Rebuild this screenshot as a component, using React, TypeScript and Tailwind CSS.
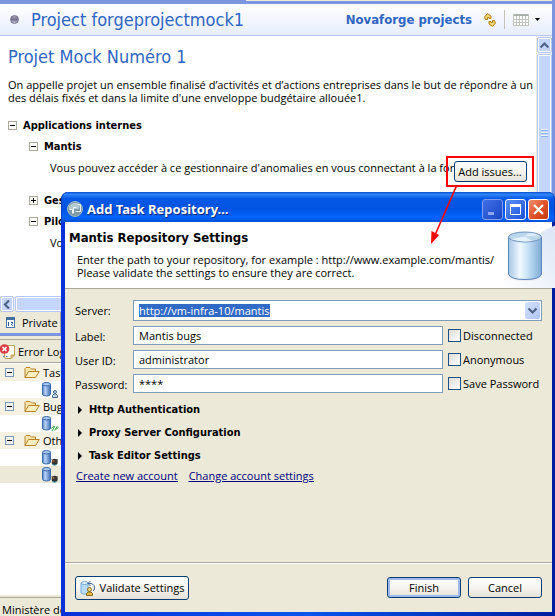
import type { ReactNode } from 'react';

const BODY = "font-['Open_Sans','Noto_Sans',sans-serif] text-[11px] leading-[13px] text-black";
const HEAVY = "font-['DejaVu_Sans_Condensed','DejaVu_Sans',sans-serif] font-bold";
const TITLE = "font-['DejaVu_Sans_Condensed','DejaVu_Sans',sans-serif] text-[18px] leading-5";

function Toggle({ open, soft }: { open: boolean; soft?: boolean }) {
  return (
    <button
      type="button"
      aria-label={open ? 'Collapse' : 'Expand'}
      className={
        soft
          ? 'grid size-[9px] shrink-0 place-items-center border border-[#7b98b8] bg-[#f4f3ee]'
          : 'grid size-[9px] shrink-0 place-items-center border border-[#aca899] bg-white'
      }
    >
      <svg width="5" height="5" viewBox="0 0 5 5" shapeRendering="crispEdges">
        <path d={open ? 'M0 2h5v1H0z' : 'M0 2h5v1H0zM2 0h1v5H2z'} fill="#000" />
      </svg>
    </button>
  );
}

function Section({ title, open, className }: { title: string; open: boolean; className: string }) {
  return (
    <div className={`flex items-center gap-1.5 whitespace-nowrap ${HEAVY} ${className}`}>
      <Toggle open={open} />
      <h3>{title}</h3>
    </div>
  );
}

function Folder() {
  return (
    <svg width="16" height="13" viewBox="0 0 16 13" className="shrink-0">
      <path d="M1 11.5V2.5L2 1.5H6L7.5 3H11.5V5.5" fill="#fbe7ae" stroke="#b98227" />
      <path d="M1 11.5L4.5 5.5H15.3L11.5 11.5Z" fill="#fdeec0" stroke="#b98227" strokeLinejoin="round" />
    </svg>
  );
}

function Repository({ kind }: { kind: 'user' | 'green' | 'bug' }) {
  return (
    <svg width="17" height="16" viewBox="0 0 17 16" className="shrink-0">
      <defs>
        <linearGradient id={`repo-${kind}`}>
          <stop offset="0" stopColor="#4f80c4" />
          <stop offset="0.35" stopColor="#b9d3f7" />
          <stop offset="1" stopColor="#3c6bb4" />
        </linearGradient>
      </defs>
      <path d="M0.500 2.500V12Q0.500 14 4.500 14T8.500 12V2.500Z" fill={`url(#repo-${kind})`} stroke="#3b68ad" />
      <ellipse cx="4.500" cy="2.200" rx="4" ry="1.700" fill="#a9c8f0" stroke="#3b68ad" />
      {kind === 'user' && (
        <g fill="#c6d9ee" stroke="#41658f">
          <path d="M10.500 15.500V13.500L12 12H14L15.500 13.500V15.500Z" />
          <circle cx="13" cy="10" r="1.500" />
        </g>
      )}
      {kind === 'green' && (
        <path d="M9 12.500l3-2M10 15l3-5M12.500 14.500l3-4.500M13.500 13.500l3-2" stroke="#35a045" fill="none" />
      )}
      {kind === 'bug' && (
        <g>
          <path d="M9.500 9.500l2 1M16 9.500l-2 1" stroke="#666" />
          <ellipse cx="12.700" cy="12" rx="3" ry="3.200" fill="#333" />
          <path d="M10.500 11h2" stroke="#e5912a" />
          <path d="M10 14.500q2.500 1.500 5 0" stroke="#4aa5b5" fill="none" />
        </g>
      )}
    </svg>
  );
}

function TreeFolder({ name }: { name: string }) {
  return (
    <div className="flex h-[17px] items-center bg-[#f5f2e3] pl-[5px] whitespace-nowrap">
      <Toggle open soft />
      <span className="ml-2.5 flex items-center gap-[3px]">
        <Folder />
        {name}
      </span>
    </div>
  );
}

function TreeRepo({ kind, selected }: { kind: 'user' | 'green' | 'bug'; selected?: boolean }) {
  return (
    <div className={`flex h-[17px] items-center pl-[42px] ${selected ? 'bg-[#ece9d8]' : 'bg-white'}`}>
      <Repository kind={kind} />
    </div>
  );
}

function Chevron({ d }: { d: string }) {
  return (
    <svg width="9" height="9" viewBox="0 0 9 9">
      <path d={d} fill="none" stroke="#4d6185" strokeWidth="2.200" />
    </svg>
  );
}

const SCROLL_FACE = 'border border-[#b3c7f5] bg-[#c6d6fb] outline outline-white -outline-offset-2';

function Field({ id, label, value, check }: { id: string; label: string; value: string; check: string }) {
  return (
    <div className="flex h-[19px] items-center">
      <label htmlFor={id} className="w-[58px] shrink-0 pt-px">
        {label}
      </label>
      <input
        id={id}
        type="text"
        defaultValue={value}
        className="h-[19px] min-w-0 flex-1 border border-[#7f9db9] bg-white px-[5px] outline-none"
      />
      <label className="flex w-[99px] shrink-0 items-center gap-0.5 pl-[5px] whitespace-nowrap">
        <input
          type="checkbox"
          className="size-[13px] shrink-0 appearance-none border border-[#1c5180] bg-linear-to-br from-[#dcdcd7] to-white checked:bg-[#21a121]"
        />
        {check}
      </label>
    </div>
  );
}

function Expandable({ title }: { title: string }) {
  return (
    <button type="button" aria-expanded={false} className={`flex h-[23px] items-center gap-[7px] ${HEAVY}`}>
      <svg width="4" height="8" viewBox="0 0 4 8">
        <path d="M0 0L4 4L0 8Z" />
      </svg>
      {title}
    </button>
  );
}

function PushButton({ children, className }: { children: ReactNode; className: string }) {
  return (
    <button
      type="button"
      className={`flex items-center justify-center rounded-[3px] border border-[#003c74] bg-linear-to-b from-white via-[#f5f4ee] to-[#e6e2d8] whitespace-nowrap ${className}`}
    >
      {children}
    </button>
  );
}

function CaptionButton({ label, tone, children }: { label: string; tone: string; children: ReactNode }) {
  return (
    <button
      type="button"
      aria-label={label}
      className={`grid size-[21px] place-items-center rounded-[3px] border ${tone}`}
    >
      <svg width="13" height="13" viewBox="0 0 13 13">
        {children}
      </svg>
    </button>
  );
}

function Editor() {
  return (
    <section className="border-r-[3px] border-b-[3px] border-[#7b96df]">
      <div className="flex h-1 flex-col bg-[#7b96df]">
        <div className="ml-[246px] h-px bg-[#ece9d8]" />
      </div>
      <header className="flex h-8 items-center border-b border-[#b4c5f2] bg-linear-to-b from-white to-[#e6edfc] pr-3 pl-2.5 whitespace-nowrap text-[#2f66c2]">
        <span className="size-[9px] rounded-full border border-[#74708c] bg-linear-to-b from-[#a7a4b8] via-[#74718e] to-[#c9c7d8]" />
        <h1 className={`ml-3 flex-1 ${TITLE}`}>Project forgeprojectmock1</h1>
        <a href="#projects" className={`text-[13px] leading-4 ${HEAVY}`}>
          Novaforge projects
        </a>
        <button type="button" aria-label="Refresh" className="ml-3">
          <svg width="12" height="14" viewBox="0 0 12 14" fill="#f7d774" stroke="#b27b13" strokeLinejoin="round">
            <path d="M0.500 4L3.500 0.500L7 3V5.500H5V4.500H3.500V6.500H1.500Z" />
            <path d="M11.500 10L8.500 13.500L5 11V8.500H7V9.500H8.500V7.500H10.500Z" />
          </svg>
        </button>
        <span className="ml-2 h-[19px] w-px bg-[#c5c2b8]" />
        <button type="button" aria-label="Views" className="ml-2 flex items-center gap-1.5">
          <svg width="16" height="12" viewBox="0 0 16 12" shapeRendering="crispEdges">
            <path d="M0 0H16V12H0Z" fill="#fff" />
            <path d="M0 0H16V2H0Z" fill="#a9b0ad" />
            <path d="M0.500 0V12M3.500 2V12M6.500 2V12M9.500 2V12M12.500 2V12M15.500 0V12M0 5.500H16M0 8.500H16M0 11.500H16" stroke="#c2c5bd" />
          </svg>
          <svg width="5" height="3" viewBox="0 0 5 3">
            <path d="M0 0H5L2.500 3Z" />
          </svg>
        </button>
      </header>

      <div className="flex bg-white">
        <div className="min-w-0 flex-1 overflow-hidden">
          <div className="pb-[47px] pl-2">
            <h2 className={`pt-[11px] text-[#2f66c2] ${TITLE}`}>Projet Mock Numéro 1</h2>
            <p className="mt-[11px] whitespace-nowrap">
              On appelle projet un ensemble finalisé d’activités et d’actions entreprises dans le but de répondre à un besoin
              <br />
              des délais fixés et dans la limite d'une enveloppe budgétaire allouée1.
            </p>
            <Section title="Applications internes" open className="mt-[15px]" />
            <div className="pl-[21px]">
              <Section title="Mantis" open className="mt-2" />
              <div className="mt-[3px] flex items-start justify-between pr-0.5 pl-[21px]">
                <p className="min-w-0 pt-[5px] whitespace-nowrap">
                  Vous pouvez accéder à ce gestionnaire d'anomalies en vous connectant à la forge.
                </p>
                <div className="grid h-[31px] w-[88px] shrink-0 place-items-center border-2 border-[#f00]">
                  <PushButton className="h-[21px] w-[73px]">Add issues...</PushButton>
                </div>
              </div>
              <Section title="Ges" open={false} className="mt-[7px]" />
              <Section title="Pilo" open className="mt-2" />
              <p className="mt-2 pl-[21px]">Vo</p>
            </div>
          </div>
          <div className="flex h-4 bg-[#eef0fb]">
            <button type="button" aria-label="Scroll left" className={`grid w-3.5 place-items-center rounded-[2px] ${SCROLL_FACE}`}>
              <Chevron d="M6 0.500L2 4.500L6 8.500" />
            </button>
            <div className={`ml-px w-[300px] rounded-[2px] ${SCROLL_FACE}`} />
          </div>
        </div>
        <div className="flex w-4 flex-col border-l border-[#ece9d8] bg-[#f3f3fa]">
          <button type="button" aria-label="Scroll up" className={`mt-px grid h-4 place-items-center rounded-[2px] ${SCROLL_FACE}`}>
            <Chevron d="M0.500 6.500L4.500 2.500L8.500 6.500" />
          </button>
          <div className={`mt-px flex h-[156px] flex-col items-center justify-center gap-px rounded-[2px] ${SCROLL_FACE}`}>
            <span className="h-px w-[7px] bg-[#eef4fe] shadow-[0_1px_0_#8cb0f8]" />
            <span className="mt-px h-px w-[7px] bg-[#eef4fe] shadow-[0_1px_0_#8cb0f8]" />
            <span className="mt-px h-px w-[7px] bg-[#eef4fe] shadow-[0_1px_0_#8cb0f8]" />
          </div>
        </div>
      </div>

      <div className="flex h-[21px] bg-[#ece9d8]">
        <button type="button" className="flex w-[61px] items-center gap-[7px] border-r border-[#aca899] pl-1.5 whitespace-nowrap">
          <svg width="9" height="11" viewBox="0 0 9 11" shapeRendering="crispEdges">
            <path d="M0.500 0.500H8.500V10.500H0.500Z" fill="#fff" stroke="#4b78a8" />
            <path d="M0 0H9V3H0Z" fill="#3e6f9f" />
            <path d="M2 5H3V9H2ZM5 5H7V6H5ZM6 6H7V7H6ZM5 7H6V9H7V8H5Z" fill="#2c5d91" />
          </svg>
          Private
        </button>
      </div>
    </section>
  );
}

function Navigator() {
  return (
    <section className="flex flex-1 flex-col bg-[#ece9d8] pt-[3px]">
      <div className="flex h-6 items-center gap-[3px] border-y border-[#aca899] whitespace-nowrap">
        <svg width="15" height="15" viewBox="0 0 15 15" className="shrink-0">
          <path d="M3 1.500H14.500V11L11 14.500H5Z" fill="#fffdf0" stroke="#c0a35a" />
          <path d="M14.500 11H11V14.500Z" fill="#e4c778" stroke="#c0a35a" />
          <circle cx="4.500" cy="5" r="4.800" fill="#dc3c45" />
          <path d="M2.500 3L6.500 7M6.500 3L2.500 7" stroke="#fff" strokeWidth="1.600" />
          <path d="M3 12.500H4.500M6 12.500H7.500" stroke="#4779b4" />
        </svg>
        Error Log
      </div>
      <div className="flex-1 bg-white pt-px">
        <TreeFolder name="Task" />
        <TreeRepo kind="user" />
        <TreeFolder name="Bug" />
        <TreeRepo kind="green" />
        <TreeFolder name="Oth" />
        <TreeRepo kind="bug" />
        <TreeRepo kind="bug" selected />
      </div>
      <footer className="mt-0.5 flex h-[19px] items-center border-t border-[#aca899] pt-1 pl-0.5 whitespace-nowrap">
        Ministère de
      </footer>
    </section>
  );
}

function DialogBanner() {
  return (
    <div className="flex h-[66px] justify-between bg-white">
      <div className="pt-2 pl-1 whitespace-nowrap">
        <h2 className={`text-[13px] leading-4 ${HEAVY}`}>Mantis Repository Settings</h2>
        <p className="mt-[7px] pl-2">
          Enter the path to your repository, for example : http://www.example.com/mantis/
          <br />
          Please validate the settings to ensure they are correct.
        </p>
      </div>
      <svg width="68" height="66" viewBox="0 0 68 66" className="shrink-0">
        <defs>
          <linearGradient id="cyl">
            <stop offset="0" stopColor="#a5c6e6" />
            <stop offset="0.35" stopColor="#f1f9ff" />
            <stop offset="0.6" stopColor="#c5e0f5" />
            <stop offset="1" stopColor="#7da9d4" />
          </linearGradient>
          <linearGradient id="swoosh" x1="0" y1="1" x2="1" y2="0">
            <stop offset="0" stopColor="#fff" />
            <stop offset="1" stopColor="#d8e3f5" />
          </linearGradient>
          <radialGradient id="shade">
            <stop offset="0.5" stopColor="#b8a2a6" />
            <stop offset="1" stopColor="#fff" stopOpacity="0" />
          </radialGradient>
        </defs>
        <path d="M8 66Q24 14 68 1V66Z" fill="url(#swoosh)" />
        <ellipse cx="31" cy="53" rx="21" ry="7" fill="url(#shade)" />
        <path d="M14.500 15V52Q16 57.500 31 57.500T47.500 52V15Z" fill="url(#cyl)" stroke="#5b87bd" />
        <ellipse cx="31" cy="15" rx="16.500" ry="5" fill="#bcd6ec" stroke="#6f94bf" />
        <path d="M17 17L31 14.500L38 19Q26 20.500 17 17Z" fill="#e7f2fb" />
        <path d="M31 14.500L34 11Q42 11 45 14Z" fill="#dcebf8" />
      </svg>
    </div>
  );
}

function TaskRepositoryDialog() {
  return (
    <div
      role="dialog"
      aria-labelledby="dialog-title"
      className="absolute top-[192px] right-0 bottom-0 left-[61px] flex flex-col rounded-t-[7px] bg-linear-to-r from-[#0831d9] via-[#0a55ee] to-[#001ea0] px-[3px] pb-1 pl-1"
    >
      <div className="-mr-[3px] -ml-1 flex h-[30px] shrink-0 items-center rounded-t-[7px] border-x border-[#0a3fc4] bg-[linear-gradient(to_bottom,#0a50d0_0%,#2f86fa_8%,#0559e6_22%,#0053e1_55%,#0563fb_85%,#0350d8_100%)] pt-1 pr-[5px] pl-[5px] text-white">
        <svg width="16" height="16" viewBox="0 0 16 16" className="shrink-0">
          <circle cx="8" cy="8" r="7.500" fill="#7c9ba9" stroke="#9cb9c5" />
          <path d="M2 5Q8 -1 13 4L12 8H2Z" fill="#b4cad2" />
          <path d="M2.500 8.500H5.500V12.500M6.500 12.500V6.500H9.500M10.500 3.500H13.500V10.500H8.500" fill="none" stroke="#eef5f7" />
        </svg>
        <h2
          id="dialog-title"
          className="ml-1 flex-1 font-['Noto_Sans',sans-serif] text-[13px] leading-4 font-bold whitespace-nowrap [text-shadow:1px_1px_0_#0a2a80]"
        >
          Add Task Repository...
        </h2>
        <div className="flex gap-0.5">
          <CaptionButton label="Minimize" tone="border-[#7f9df0] bg-linear-to-br from-[#3f6fe8] to-[#1c46c4]">
            <path d="M2 9h6v3H2z" fill="#8ba6ee" />
          </CaptionButton>
          <CaptionButton label="Maximize" tone="border-white bg-linear-to-br from-[#5a8ff8] to-[#1c50d8]">
            <path d="M1.500 2h10v9.500h-10z" fill="none" stroke="#fff" />
            <path d="M1 1h11v3H1z" fill="#fff" />
          </CaptionButton>
          <CaptionButton label="Close" tone="border-white bg-linear-to-br from-[#f0906f] via-[#e2532a] to-[#c23a12]">
            <path d="M2 2L11 11M11 2L2 11" stroke="#fff" strokeWidth="2.200" />
          </CaptionButton>
        </div>
      </div>

      <div className="flex flex-1 flex-col bg-[#ece9d8]">
        <DialogBanner />
        <form className="flex flex-1 flex-col border-t border-[#aca899]" onSubmit={(event) => event.preventDefault()}>
          <div className="flex flex-col gap-[5px] px-2.5 pt-[11px]">
            <div className="flex h-[21px] items-center">
              <label htmlFor="server" className="w-[58px] shrink-0">
                Server:
              </label>
              <div className="flex h-[21px] min-w-0 flex-1 items-center justify-between border border-[#7f9db9] bg-white pr-px pl-[5px]">
                <select id="server" className="h-[13px] appearance-none bg-[#316ac5] p-0 text-white outline-none">
                  <option>http://vm-infra-10/mantis</option>
                </select>
                <span className="grid h-[17px] w-[15px] place-items-center rounded-[2px] bg-linear-to-br from-[#d5e1fc] to-[#afc5f5]">
                  <Chevron d="M0.500 2.500L4.500 6.500L8.500 2.500" />
                </span>
              </div>
            </div>
            <Field id="label" label="Label:" value="Mantis bugs" check="Disconnected" />
            <Field id="user" label="User ID:" value="administrator" check="Anonymous" />
            <Field id="password" label="Password:" value="****" check="Save Password" />
          </div>
          <div className="flex flex-col items-start pt-[5px] pl-[13px]">
            <Expandable title="Http Authentication" />
            <Expandable title="Proxy Server Configuration" />
            <Expandable title="Task Editor Settings" />
          </div>
          <div className="mt-0.5 flex gap-[11px] pl-[11px] whitespace-nowrap text-[#000080] underline">
            <a href="#create">Create new account</a>
            <a href="#change">Change account settings</a>
          </div>
          <div className="mt-auto flex h-[50px] shrink-0 items-center gap-[7px] border-t border-[#aca899] pr-2.5 pl-2.5 shadow-[inset_0_1px_0_white]">
            <PushButton className="mr-auto h-6 w-[114px] gap-1">
              <svg width="16" height="16" viewBox="0 0 16 16">
                <path d="M1 3V13Q2 14.500 8 14V3Z" fill="#b9dcf6" stroke="#7aa9d6" />
                <ellipse cx="4.500" cy="3" rx="3.500" ry="1.500" fill="#e4f3fd" stroke="#7aa9d6" />
                <path d="M8 3.500H11Q15 4.500 14.500 9L13 11M10.500 1L8 3.500L10.500 6" fill="none" stroke="#3b6b9d" />
                <path d="M6.500 15.500V13.500L8 12H11L12.500 13.500V15.500Z" fill="#e2b84c" stroke="#8c6a1f" />
                <circle cx="9.500" cy="9.500" r="2" fill="#f4d98c" stroke="#8c6a1f" />
              </svg>
              Validate Settings
            </PushButton>
            <PushButton className="h-[21px] w-[74px] shadow-[inset_0_0_0_2px_#9db9ee]">Finish</PushButton>
            <PushButton className="h-[21px] w-[74px]">Cancel</PushButton>
          </div>
        </form>
      </div>
    </div>
  );
}

export default function App() {
  return (
    <main className={`relative flex min-h-screen flex-col overflow-hidden bg-[#ece9d8] ${BODY}`}>
      <Editor />
      <Navigator />
      <TaskRepositoryDialog />
      <svg width="30" height="60" viewBox="0 0 30 60" className="pointer-events-none absolute top-[186px] left-[429px]">
        <path d="M27.500 0L6 49" stroke="#f00" strokeWidth="1.600" />
        <path d="M2 58L2.500 45L10 49Z" fill="#f00" />
      </svg>
    </main>
  );
}
